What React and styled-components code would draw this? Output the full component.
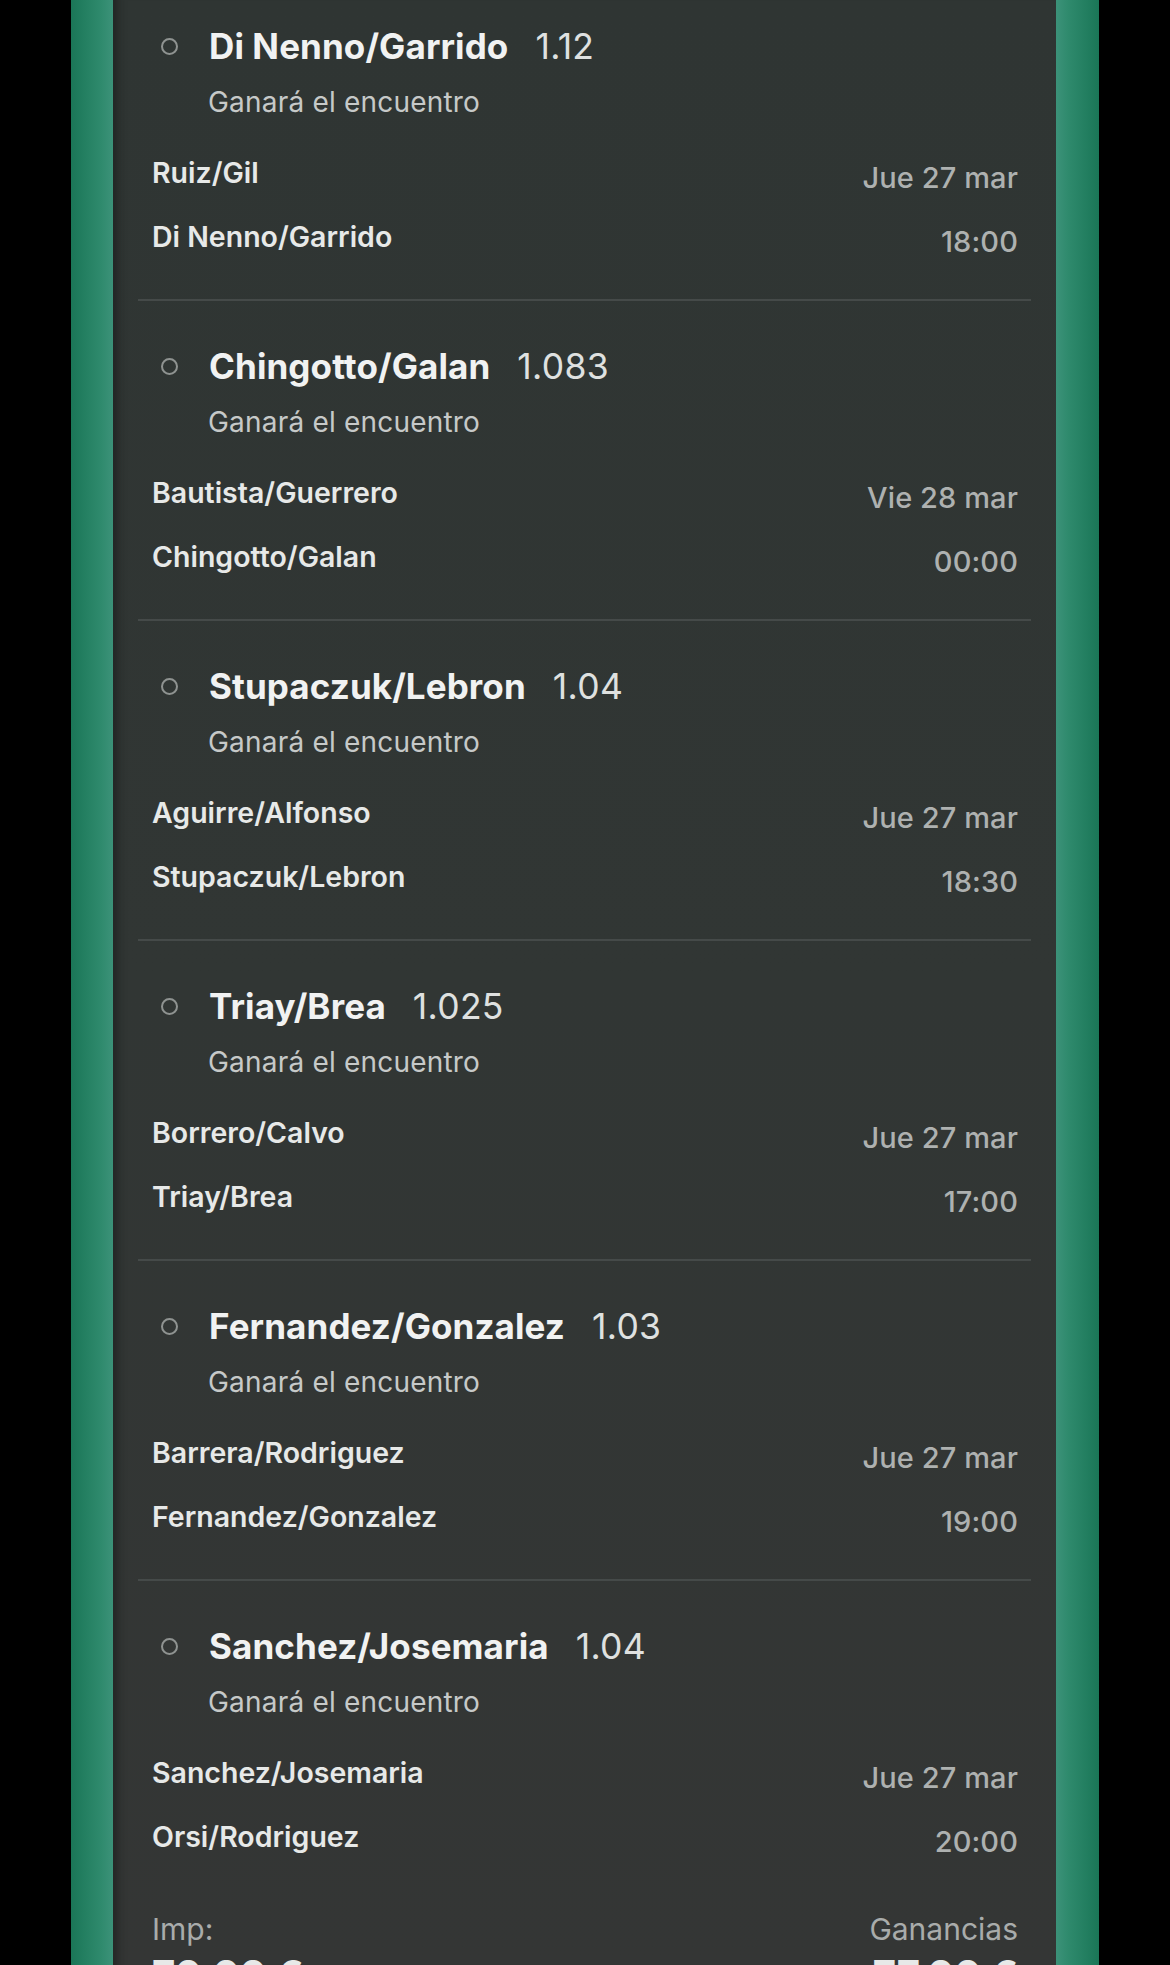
import React from 'react'
import styled, {createGlobalStyle} from 'styled-components'

const GlobalStyle = createGlobalStyle`
  * { box-sizing: border-box; }
  body {
    margin: 0;
    background: #000;
    font-family: Inter, "Liberation Sans", sans-serif;
    -webkit-font-smoothing: antialiased;
  }
`

const bets = [
  {pick: 'Di Nenno/Garrido', odds: '1.12', home: 'Ruiz/Gil', away: 'Di Nenno/Garrido', day: 'Jue 27 mar', time: '18:00'},
  {pick: 'Chingotto/Galan', odds: '1.083', home: 'Bautista/Guerrero', away: 'Chingotto/Galan', day: 'Vie 28 mar', time: '00:00'},
  {pick: 'Stupaczuk/Lebron', odds: '1.04', home: 'Aguirre/Alfonso', away: 'Stupaczuk/Lebron', day: 'Jue 27 mar', time: '18:30'},
  {pick: 'Triay/Brea', odds: '1.025', home: 'Borrero/Calvo', away: 'Triay/Brea', day: 'Jue 27 mar', time: '17:00'},
  {pick: 'Fernandez/Gonzalez', odds: '1.03', home: 'Barrera/Rodriguez', away: 'Fernandez/Gonzalez', day: 'Jue 27 mar', time: '19:00'},
  {pick: 'Sanchez/Josemaria', odds: '1.04', home: 'Sanchez/Josemaria', away: 'Orsi/Rodriguez', day: 'Jue 27 mar', time: '20:00'},
]

const App = () => {
  return <>
    <GlobalStyle />
    <Screen>
      <Frame>
        <Sheet>
          <BetList>
            {bets.map((b, index) => {
              return <BetCard key={index}>
                <PickRow>
                  <Radio />
                  <PickName>{b.pick}</PickName>
                  <Odds>{b.odds}</Odds>
                </PickRow>
                <Market>Ganará el encuentro</Market>
                <MatchInfo>
                  <Teams>
                    <Team>{b.home}</Team>
                    <Team>{b.away}</Team>
                  </Teams>
                  <When>
                    <span>{b.day}</span>
                    <span>{b.time}</span>
                  </When>
                </MatchInfo>
              </BetCard>
            })}
          </BetList>

          {/* totals, the amounts run past the bottom of the screen */}
          <Summary>
            <SumCol>
              <SumLabel>Imp:</SumLabel>
              <SumValue>70.00 €</SumValue>
            </SumCol>
            <SumCol $right>
              <SumLabel>Ganancias</SumLabel>
              <SumValue>77.00 €</SumValue>
            </SumCol>
          </Summary>
        </Sheet>
      </Frame>
    </Screen>
  </>
}

export default App

const Screen = styled.div`
  width: 1170px;
  height: 1965px;
  overflow: hidden;
  display: flex;
  justify-content: center;
  background: #000;
`

// green rim on both sides of the slip
const Frame = styled.div`
  width: 1028px;
  height: 100%;
  padding: 0 43px 0 42px;
  display: flex;
  background: linear-gradient(90deg,
    #1a7657 0px, #2f8a6d 30px, #3c9279 42px,
    #3c9279 calc(100% - 43px), #2f8a6d calc(100% - 31px), #1a7657 100%);
`

const Sheet = styled.div`
  flex: 1;
  display: flex;
  flex-direction: column;
  overflow: hidden;
  background: linear-gradient(180deg, #2f3533 0%, #313634 50%, #343635 100%);
  box-shadow: inset 14px 0 10px -10px rgba(20, 22, 22, 0.55);
`

const BetList = styled.div`
  margin-top: -21px;
  padding: 0 25px;
`

const BetCard = styled.div`
  border-top: 2px solid #454a49;
  padding: 45px 13px 37px 14px;
`

const PickRow = styled.div`
  display: flex;
  align-items: center;
  height: 40px;
  padding-left: 9px;
`

const Radio = styled.span`
  width: 17px;
  height: 17px;
  border-radius: 50%;
  border: 2.5px solid #8f9391;
  margin-right: 31px;
  flex-shrink: 0;
`

const PickName = styled.span`
  font-size: 35px;
  font-weight: 700;
  color: #f1f2f2;
  letter-spacing: 0.1px;
`

const Odds = styled.span`
  font-size: 35.5px;
  font-weight: 400;
  color: #dfe1e0;
  margin-left: 27px;
  letter-spacing: 0.3px;
`

const Market = styled.div`
  margin-top: 18px;
  padding-left: 56px;
  font-size: 28px;
  line-height: 36px;
  color: #c6c9c8;
  letter-spacing: 0.2px;
`

const MatchInfo = styled.div`
  display: flex;
  justify-content: space-between;
  margin-top: 33px;
`

const Teams = styled.div`
  display: flex;
  flex-direction: column;
  gap: 24px;
`

const Team = styled.span`
  font-size: 28.5px;
  line-height: 40px;
  font-weight: 600;
  color: #e7e9e8;
`

const When = styled.div`
  display: flex;
  flex-direction: column;
  align-items: flex-end;
  gap: 24px;
  padding-top: 5px;
  span {
    font-size: 29px;
    line-height: 40px;
    font-weight: 500;
    color: #aeb1b0;
    letter-spacing: 0.1px;
  }
`

const Summary = styled.div`
  display: flex;
  justify-content: space-between;
  margin: 12px 25px 0;
  padding: 0 13px 0 14px;
`

const SumCol = styled.div`
  display: flex;
  flex-direction: column;
  align-items: ${p => p.$right ? 'flex-end' : 'flex-start'};
`

const SumLabel = styled.span`
  font-size: 30px;
  line-height: 36px;
  color: #a9acab;
`

const SumValue = styled.span`
  margin-top: 4px;
  font-size: 40px;
  line-height: 48px;
  font-weight: 700;
  color: #e7e9e8;
`
